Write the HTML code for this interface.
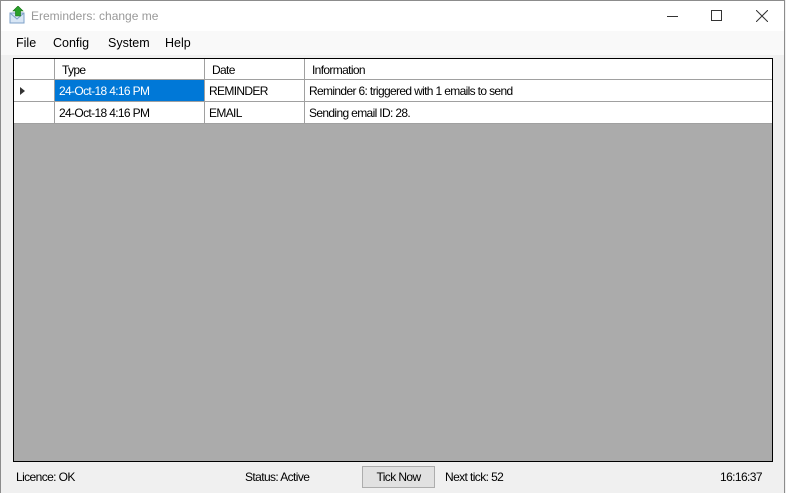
<!DOCTYPE html>
<html><head><style>
*{margin:0;padding:0;box-sizing:border-box}
body{width:786px;height:493px;background:#f0f0f0;font-family:"Liberation Sans",sans-serif;font-size:12px;color:#000;position:relative;overflow:hidden}
.frame{position:absolute;left:0;top:0;width:785px;height:493px;border:1px solid #8c8c8c;border-bottom:none}
.title{position:absolute;left:1px;top:1px;width:783px;height:30px;background:#fff}
.title .t{position:absolute;left:30px;top:8px;font-size:12px;color:#999}
.menu{position:absolute;left:1px;top:31px;width:783px;height:24px;background:#f9f9f9}
.menu span{position:absolute;top:5px;font-size:12.5px}
.grid{position:absolute;left:13px;top:58px;width:760px;height:404px;border:1px solid #000;background:#ababab}
.row{position:absolute;left:0;width:758px;background:#fff}
.c{position:absolute;top:0;height:100%;border-right:1px solid #a0a0a0;padding-left:4px;white-space:nowrap;letter-spacing:-0.65px}
.abs{position:absolute;font-size:12px;letter-spacing:-0.6px}
</style></head><body>
<div class="frame"></div>
<div class="title">
<svg style="position:absolute;left:8px;top:5px" width="18" height="18" viewBox="0 0 18 18">
<rect x="1" y="7" width="14" height="10" fill="#d8e6f5" stroke="#7ea0c8"/>
<path d="M1 7 L8 13 L15 7" fill="none" stroke="#7ea0c8"/>
<path d="M9 0 L14 5 L11.5 5 L11.5 10 L6.5 10 L6.5 5 L4 5 Z" fill="#2aa02a" stroke="#137013" stroke-width=".6"/>
</svg>
<span class="t">Ereminders: change me</span>
<div style="position:absolute;left:666px;top:15px;width:11px;height:1px;background:#333"></div>
<div style="position:absolute;left:710px;top:9px;width:11px;height:11px;border:1px solid #333"></div>
<svg style="position:absolute;left:755px;top:9px" width="12" height="12"><path d="M0 0L12 12M12 0L0 12" stroke="#333" stroke-width="1"/></svg>
</div>
<div class="menu">
<span style="left:15px">File</span><span style="left:52px">Config</span><span style="left:107px">System</span><span style="left:164px">Help</span>
</div>
<div class="grid">
<div class="row" style="top:0;height:21px;border-bottom:1px solid #a0a0a0">
<div class="c" style="left:0;width:41px"></div>
<div class="c" style="left:41px;width:150px;padding-left:7px;padding-top:4px">Type</div>
<div class="c" style="left:191px;width:100px;padding-left:7px;padding-top:4px">Date</div>
<div class="c" style="left:291px;width:467px;padding-left:7px;padding-top:4px;border-right:none">Information</div>
</div>
<div class="row" style="top:21px;height:22px;border-bottom:1px solid #a0a0a0">
<div class="c" style="left:0;width:41px"><svg style="position:absolute;left:6px;top:7px" width="5" height="8"><path d="M0 0L5 4L0 8Z" fill="#333"/></svg></div>
<div class="c" style="left:41px;width:150px;padding-top:4px;background:#0078d7;color:#fff">24-Oct-18 4:16 PM</div>
<div class="c" style="left:191px;width:100px;padding-top:4px">REMINDER</div>
<div class="c" style="left:291px;width:467px;padding-top:4px;border-right:none">Reminder 6: triggered with 1 emails to send</div>
</div>
<div class="row" style="top:43px;height:22px;border-bottom:1px solid #a0a0a0">
<div class="c" style="left:0;width:41px"></div>
<div class="c" style="left:41px;width:150px;padding-top:4px">24-Oct-18 4:16 PM</div>
<div class="c" style="left:191px;width:100px;padding-top:4px">EMAIL</div>
<div class="c" style="left:291px;width:467px;padding-top:4px;border-right:none">Sending email ID: 28.</div>
</div>
</div>
<span class="abs" style="left:16px;top:470px">Licence: OK</span>
<span class="abs" style="left:245px;top:470px">Status: Active</span>
<div style="position:absolute;left:362px;top:466px;width:73px;height:22px;background:#e1e1e1;border:1px solid #adadad;text-align:center;padding-top:3px;letter-spacing:-0.6px">Tick Now</div>
<span class="abs" style="left:445px;top:470px">Next tick: 52</span>
<span class="abs" style="left:720px;top:470px">16:16:37</span>
</body></html>
